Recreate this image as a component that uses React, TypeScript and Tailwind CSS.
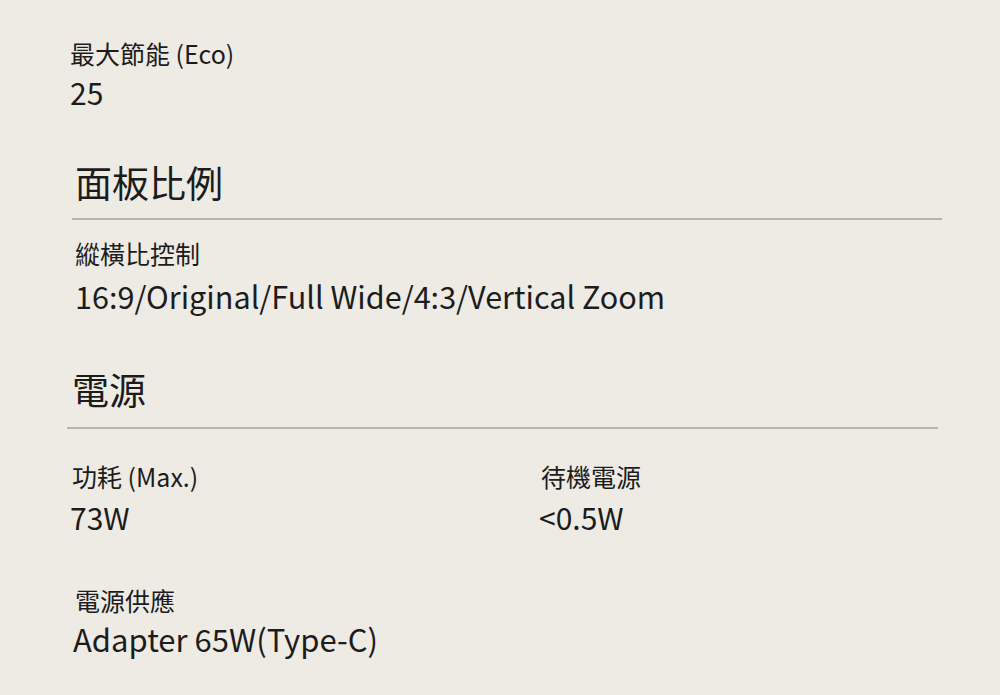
export default function App() {
  const font = { fontFamily: '"Noto Sans CJK TC", "Noto Sans", sans-serif' };
  return (
    <div className="h-[695px] w-[1000px] overflow-hidden bg-[#eeebe5] text-[#1c1c1c]" style={font}>
      {/* 最大節能 */}
      <div className="pl-[70px] pt-[37px]">
        <div className="text-[25px] leading-[32px]">最大節能 (Eco)</div>
        <div className="mt-[6px] text-[30px] leading-[34px]">25</div>
      </div>

      {/* 面板比例 */}
      <div className="mt-[50px]">
        <h2 className="pl-[75px] text-[37px] leading-[46px]">面板比例</h2>
        <div className="ml-[72px] mt-[13px] h-[2px] w-[870px] bg-[#b7b3ad]" />
        <div className="pl-[75px] pt-[17px]">
          <div className="text-[25px] leading-[32px]">縱橫比控制</div>
          <div className="mt-[9px] text-[30.6px] leading-[36px]">16:9/Original/Full Wide/4:3/Vertical Zoom</div>
        </div>
      </div>

      {/* 電源 */}
      <div className="mt-[52px]">
        <h2 className="pl-[72px] text-[37px] leading-[46px]">電源</h2>
        <div className="ml-[67px] mt-[15px] h-[2px] w-[871px] bg-[#b7b3ad]" />
        <div className="grid grid-cols-[541px_1fr] pt-[31px]">
          <div className="pl-[72px]">
            <div className="text-[25px] leading-[32px]">功耗 (Max.)</div>
            <div className="mt-[8px] -ml-[2px] text-[30px] leading-[34px]">73W</div>
          </div>
          <div>
            <div className="text-[25px] leading-[32px]">待機電源</div>
            <div className="mt-[8px] -ml-[2px] text-[30px] leading-[34px]">&lt;0.5W</div>
          </div>
        </div>
        <div className="pl-[75px] pt-[50px]">
          <div className="text-[25px] leading-[32px]">電源供應</div>
          <div className="mt-[6px] -ml-[2px] text-[31px] leading-[34px]">Adapter 65W(Type-C)</div>
        </div>
      </div>
    </div>
  );
}
